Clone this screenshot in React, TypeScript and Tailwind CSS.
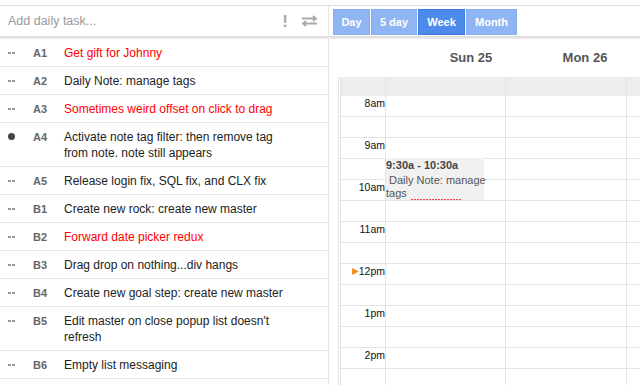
const tasks = [
  { code: 'A1', text: 'Get gift for Johnny', red: true },
  { code: 'A2', text: 'Daily Note: manage tags' },
  { code: 'A3', text: 'Sometimes weird offset on click to drag', red: true },
  { code: 'A4', text: 'Activate note tag filter: then remove tag from note. note still appears', dot: true },
  { code: 'A5', text: 'Release login fix, SQL fix, and CLX fix' },
  { code: 'B1', text: 'Create new rock: create new master' },
  { code: 'B2', text: 'Forward date picker redux', red: true },
  { code: 'B3', text: 'Drag drop on nothing...div hangs' },
  { code: 'B4', text: 'Create new goal step: create new master' },
  { code: 'B5', text: "Edit master on close popup list doesn't refresh" },
  { code: 'B6', text: 'Empty list messaging' },
];

const hours = ['8am', '9am', '10am', '11am', '12pm', '1pm', '2pm'];

function SwapIcon() {
  return (
    <svg width="17" height="12" viewBox="0 0 17 12" fill="none" stroke="#a9a9a9" strokeWidth="1.8">
      <path d="M1 3.5H15M12 1L15 3.5L12 6" />
      <path d="M16 8.5H2M5 6L2 8.5L5 11" />
    </svg>
  );
}

function App() {
  return (
    <div className="w-[640px] h-[385px] overflow-hidden bg-white pt-[5px] font-['Liberation_Sans',Arial,sans-serif]">
      <div className="flex h-[380px] border-t border-[#dedede]">
        {/* Task list */}
        <div className="w-[329px] shrink-0 border-r border-[#e4e4e4] flex flex-col">
          <div className="h-[30px] flex items-center pl-[8px] pr-[10px]">
            <span className="flex-1 text-[12.5px] text-[#999]">Add daily task...</span>
            <span className="text-[17px] font-bold text-[#a9a9a9] leading-none mr-[13px] mt-[1px]">!</span>
            <SwapIcon />
          </div>
          <div className="h-[3px] bg-gradient-to-b from-[#d9d9d9] to-[#eeeeee]" />
          {tasks.map((t) => (
            <div
              key={t.code}
              className="flex items-start px-[8px] py-[5.5px] border-b border-[#e6e6e6] text-[12px] leading-[16px]"
            >
              <div className="w-[25px] shrink-0 h-[16px] flex items-center">
                {t.dot ? (
                  <span className="w-[7px] h-[7px] rounded-full bg-[#444]" />
                ) : (
                  <span className="flex gap-[1px]">
                    <span className="w-[3px] h-[2px] bg-[#999]" />
                    <span className="w-[3px] h-[2px] bg-[#999]" />
                  </span>
                )}
              </div>
              <div className="w-[31px] shrink-0 text-[11px] font-bold text-[#666]">{t.code}</div>
              <div className={`w-[232px] ${t.red ? 'text-[#ff0000]' : 'text-[#222]'}`}>{t.text}</div>
            </div>
          ))}
        </div>

        {/* Calendar */}
        <div className="flex-1 flex flex-col">
          <div className="h-[30px] flex items-start pl-[4px] pt-[3px] gap-[1px]">
            <button className="w-[37px] h-[26px] bg-[#8fb5f5] border border-[#86aef3] text-white text-[11px] font-bold">Day</button>
            <button className="w-[46px] h-[26px] bg-[#8fb5f5] border border-[#86aef3] text-white text-[11px] font-bold">5 day</button>
            <button className="w-[47px] h-[26px] bg-[#4d8ae9] border border-[#3e7ce0] text-white text-[11px] font-bold">Week</button>
            <button className="w-[51px] h-[26px] bg-[#8fb5f5] border border-[#86aef3] text-white text-[11px] font-bold">Month</button>
          </div>
          <div className="h-[3px] bg-gradient-to-b from-[#d9d9d9] to-[#eeeeee]" />
          <div className="h-[38px] flex items-center pl-[85px] text-[13px] font-bold text-[#555]">
            <div className="w-[114px] text-center">Sun 25</div>
            <div className="w-[114px] text-center">Mon 26</div>
          </div>

          <div className="relative flex-1 ml-[9px] border-l border-[#e3e3e3] pl-[1px] overflow-hidden">
            <div className="flex h-[19px] bg-[#ededed]">
              <div className="w-[46px] shrink-0 border-l border-r border-[#e4e4e4]" />
              <div className="w-[120px] shrink-0 border-r border-[#e4e4e4]" />
              <div className="w-[121px] shrink-0 border-r border-[#e4e4e4]" />
              <div className="flex-1" />
            </div>
            {Array.from({ length: 14 }).map((_, i) => {
              const label = i % 2 === 0 ? hours[i / 2] : '';
              return (
                <div key={i} className="flex h-[21px] border-b border-[#e3e3e3]">
                  <div className="w-[46px] shrink-0 border-l border-r border-[#e3e3e3] flex justify-end items-start text-[10.5px] leading-[14px] text-[#111]">
                    {label === '12pm' && (
                      <svg width="7" height="7" viewBox="0 0 7 7" className="mt-[4px]">
                        <path d="M0 0L7 3.5L0 7Z" fill="#f09322" />
                      </svg>
                    )}
                    {label}
                  </div>
                  <div className="w-[120px] shrink-0 border-r border-[#e3e3e3]" />
                  <div className="w-[121px] shrink-0 border-r border-[#e3e3e3]" />
                  <div className="flex-1" />
                </div>
              );
            })}

            {/* Event */}
            <div className="absolute left-[47px] top-[81px] w-[98px] h-[42px] bg-[#f1f1f1]">
              <div className="text-[11px] font-bold text-[#444] leading-[13px] pt-[1px] whitespace-nowrap">9:30a - 10:30a</div>
              <div className="text-[11px] text-[#555] leading-[12.5px] pt-[2px] whitespace-nowrap">
                &nbsp;Daily Note: manage
                <br />
                tags
              </div>
              <div className="absolute left-[25px] top-[41px] w-[50px] h-[1px] bg-[repeating-linear-gradient(90deg,#ff4040_0px,#ff4040_2px,transparent_2px,transparent_3px)]" />
            </div>
          </div>
        </div>
      </div>
    </div>
  );
}

export default App;
